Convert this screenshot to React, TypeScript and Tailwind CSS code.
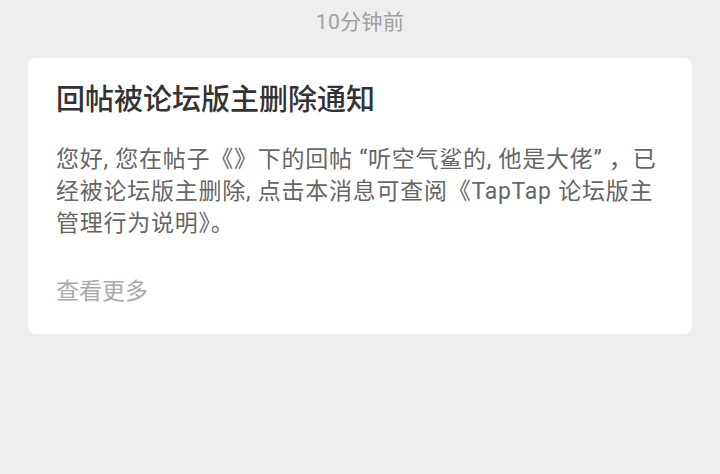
export default function App() {
  return (
    <div
      className="w-[720px] h-[474px] bg-[#eeeeee] px-[28px] pt-[8px]"
      style={{ fontFamily: 'Roboto, "Noto Sans CJK SC", sans-serif' }}
    >
      <div className="text-center text-[21px] leading-[28px] tracking-[0.4px] text-[#a0a0a0]">10分钟前</div>

      <div className="mt-[22px] bg-white rounded-[8px] px-[28px] pt-[24px] pb-[26px]">
        <h1 className="text-[29px] leading-[36px] font-medium text-[#333333]">回帖被论坛版主删除通知</h1>
        <p className="mt-[26px] text-[23px] leading-[32px] tracking-[0.75px] text-[#666666]">
          您好, 您在帖子《》下的回帖 “听空气鲨的, 他是大佬” ，已
          <br />
          经被论坛版主删除, 点击本消息可查阅《TapTap 论坛版主
          <br />
          管理行为说明》。
        </p>
        <div className="mt-[36px] text-[23px] leading-[32px] text-[#aaaaaa]">查看更多</div>
      </div>
    </div>
  )
}
